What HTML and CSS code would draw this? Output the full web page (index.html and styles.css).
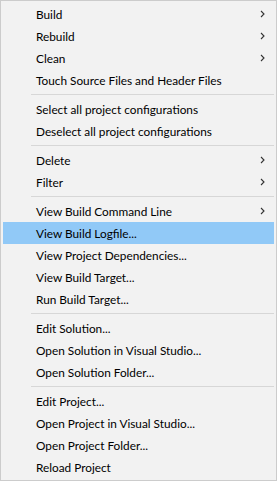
FILE: index.html
```html
<!DOCTYPE html>
<html lang="en">
<head>
    <meta charset="UTF-8">
    <meta name="viewport" content="width=device-width, initial-scale=1.0">
    <title>Project Menu</title>
    <link rel="stylesheet" href="styles.css">
</head>
<body>

    <ul class="menu">
        <li class="item"><span>Build</span><svg class="arrow" width="5" height="8" viewBox="0 0 5 8"><path d="M1 1 L4 4 L1 7"/></svg></li>
        <li class="item"><span>Rebuild</span><svg class="arrow" width="5" height="8" viewBox="0 0 5 8"><path d="M1 1 L4 4 L1 7"/></svg></li>
        <li class="item"><span>Clean</span><svg class="arrow" width="5" height="8" viewBox="0 0 5 8"><path d="M1 1 L4 4 L1 7"/></svg></li>
        <li class="item"><span>Touch Source Files and Header Files</span></li>
        <li class="sep"></li>
        <li class="item"><span>Select all project configurations</span></li>
        <li class="item"><span>Deselect all project configurations</span></li>
        <li class="sep"></li>
        <li class="item"><span>Delete</span><svg class="arrow" width="5" height="8" viewBox="0 0 5 8"><path d="M1 1 L4 4 L1 7"/></svg></li>
        <li class="item"><span>Filter</span><svg class="arrow" width="5" height="8" viewBox="0 0 5 8"><path d="M1 1 L4 4 L1 7"/></svg></li>
        <li class="sep"></li>
        <li class="item"><span>View Build Command Line</span><svg class="arrow" width="5" height="8" viewBox="0 0 5 8"><path d="M1 1 L4 4 L1 7"/></svg></li>
        <li class="item active"><span>View Build Logfile...</span></li>
        <li class="item"><span>View Project Dependencies...</span></li>
        <li class="item"><span>View Build Target...</span></li>
        <li class="item"><span>Run Build Target...</span></li>
        <li class="sep"></li>
        <li class="item"><span>Edit Solution...</span></li>
        <li class="item"><span>Open Solution in Visual Studio...</span></li>
        <li class="item"><span>Open Solution Folder...</span></li>
        <li class="sep"></li>
        <li class="item"><span>Edit Project...</span></li>
        <li class="item"><span>Open Project in Visual Studio...</span></li>
        <li class="item"><span>Open Project Folder...</span></li>
        <li class="item"><span>Reload Project</span></li>
    </ul>

</body>
</html>
```

FILE: styles.css
```css
* {
    margin: 0;
    padding: 0;
    box-sizing: border-box;
}
body {
    background: #f2f2f2;
    font-family: Lato, "Noto Sans", sans-serif;
    font-size: 11.8px;
    color: #000;
}
.menu {
    list-style: none;
    width: 277px;
    height: 481px;
    background: #f2f2f2;
    border: 1px solid #cccccc;
    padding: 2px;
}
.item {
    display: flex;
    align-items: center;
    justify-content: space-between;
    height: 22px;
    padding: 0 9px 0 33px;
}
.item.active {
    background: #91c9f7;
}
.arrow {
    fill: none;
    stroke: #333;
    stroke-width: 1.1;
}
.sep {
    height: 7px;
    display: flex;
    align-items: center;
    padding-left: 28px;
}
.sep::after {
    content: "";
    flex: 1;
    height: 1px;
    background: #d7d7d7;
}
```
